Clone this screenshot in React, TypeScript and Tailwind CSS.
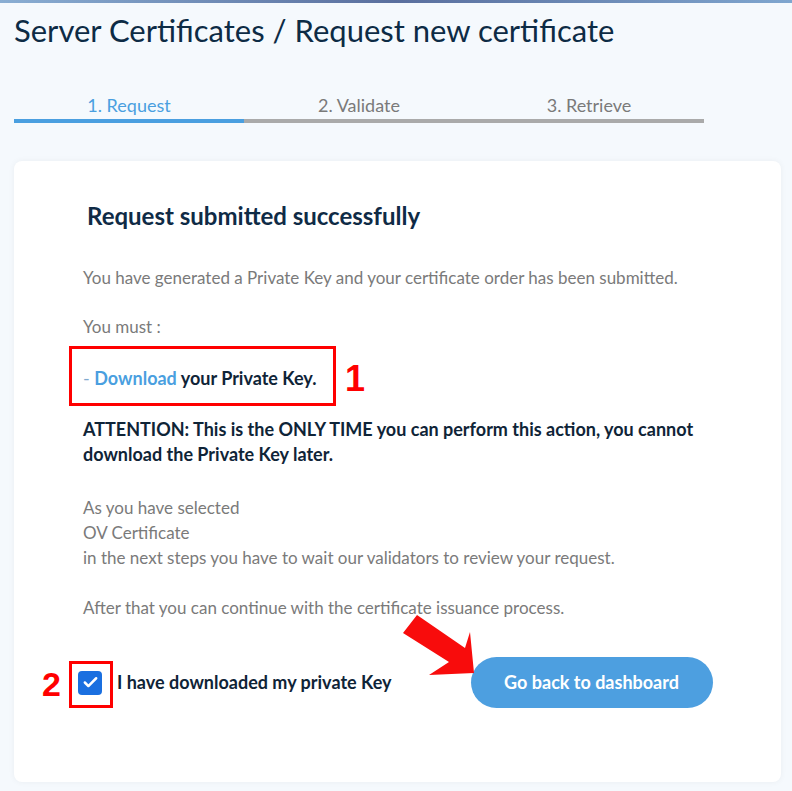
import { Check } from 'lucide-react';

const steps = ['1. Request', '2. Validate', '3. Retrieve'];

export default function App() {
  return (
    <div className="min-h-[791px] bg-[#f5f9fd] font-['Lato',_sans-serif]">
      {/* top gradient strip */}
      <div className="h-[3px] bg-gradient-to-r from-[#8aaed3] via-[#5a6f9e] to-[#7fa6cf]" />

      <div className="px-[14px]">
        <h1 className="mt-[9px] text-[31px] leading-[36px] text-[#0d2b45]">
          Server Certificates / Request new certificate
        </h1>

        {/* Stepper */}
        <div className="mt-[46px] flex w-[690px]">
          {steps.map((s, i) => (
            <div key={s} className="flex-1">
              <div
                className={`text-center text-[18px] leading-[22px] ${i === 0 ? 'text-[#4a9fe0]' : 'text-[#7a7a7a]'}`}
              >
                {s}
              </div>
              <div className={`mt-[3px] h-[4px] ${i === 0 ? 'bg-[#4a9fe0]' : 'bg-[#aaaaaa]'}`} />
            </div>
          ))}
        </div>

        {/* Card */}
        <div className="mt-[38px] w-[767px] rounded-[8px] bg-white pl-[69px] pr-[40px] pt-[40px] pb-[74px] shadow-[0_0_6px_rgba(0,0,0,0.05)]">
          <h2 className="ml-[4px] text-[24px] font-bold leading-[30px] text-[#0f2b46]">
            Request submitted successfully
          </h2>

          <div className="mt-[34px] text-[17px] leading-[25px] text-[#7a7a7a]">
            <p>You have generated a Private Key and your certificate order has been submitted.</p>

            <p className="mt-[24px]">You must :</p>

            <div className="relative mt-[27px]">
              <p className="text-[18px] font-bold text-[#0f2437]">
                <span className="font-normal text-[#7fa9cf]">- </span>
                <span className="text-[#4a9fe0]">Download</span> your Private Key.
              </p>
              <div className="absolute left-[-14px] top-[-20px] h-[60px] w-[267px] border-[3px] border-[#ff0000]" />
              <span className="absolute left-[262px] top-[-7px] font-['Liberation_Sans',_sans-serif] text-[36px] font-bold leading-[40px] text-[#ff0000]">
                1
              </span>
            </div>

            <p className="mt-[26px] text-[18px] font-bold text-[#0f2437]">
              ATTENTION: This is the ONLY TIME you can perform this action, you cannot
              <br />
              download the Private Key later.
            </p>

            <p className="mt-[28px]">
              As you have selected
              <br />
              OV Certificate
              <br />
              in the next steps you have to wait our validators to review your request.
            </p>

            <p className="mt-[25px]">After that you can continue with the certificate issuance process.</p>
          </div>

          {/* Bottom row */}
          <div className="relative mt-[37px] flex items-center">
            <div className="relative ml-[-5px] flex items-center">
              <div className="flex h-[24px] w-[24px] items-center justify-center rounded-[4px] bg-[#1a6fe0]">
                <Check className="h-[17px] w-[17px] text-white" strokeWidth={3.5} />
              </div>
              <div className="absolute left-[-9px] top-[-10px] h-[47px] w-[44px] border-[3px] border-[#ff0000]" />
              <span className="absolute left-[-36px] top-[-2px] font-['Liberation_Sans',_sans-serif] text-[34px] font-bold leading-[30px] text-[#ff0000]">
                2
              </span>
            </div>
            <span className="ml-[15px] text-[18px] font-bold text-[#0f2437]">
              I have downloaded my private Key
            </span>

            <button className="ml-[79px] h-[51px] w-[242px] rounded-full bg-[#4d9fe0] text-[18px] font-bold text-white">
              Go back to dashboard
            </button>

            {/* red arrow */}
            <svg
              className="absolute left-[320px] top-[-42px]"
              width="80"
              height="66"
              viewBox="0 0 80 66"
            >
              <polygon points="14,0 62,33 67,17 71,58 26,60 46,47 0,18" fill="#f80c0c" />
            </svg>
          </div>
        </div>
      </div>
    </div>
  );
}
